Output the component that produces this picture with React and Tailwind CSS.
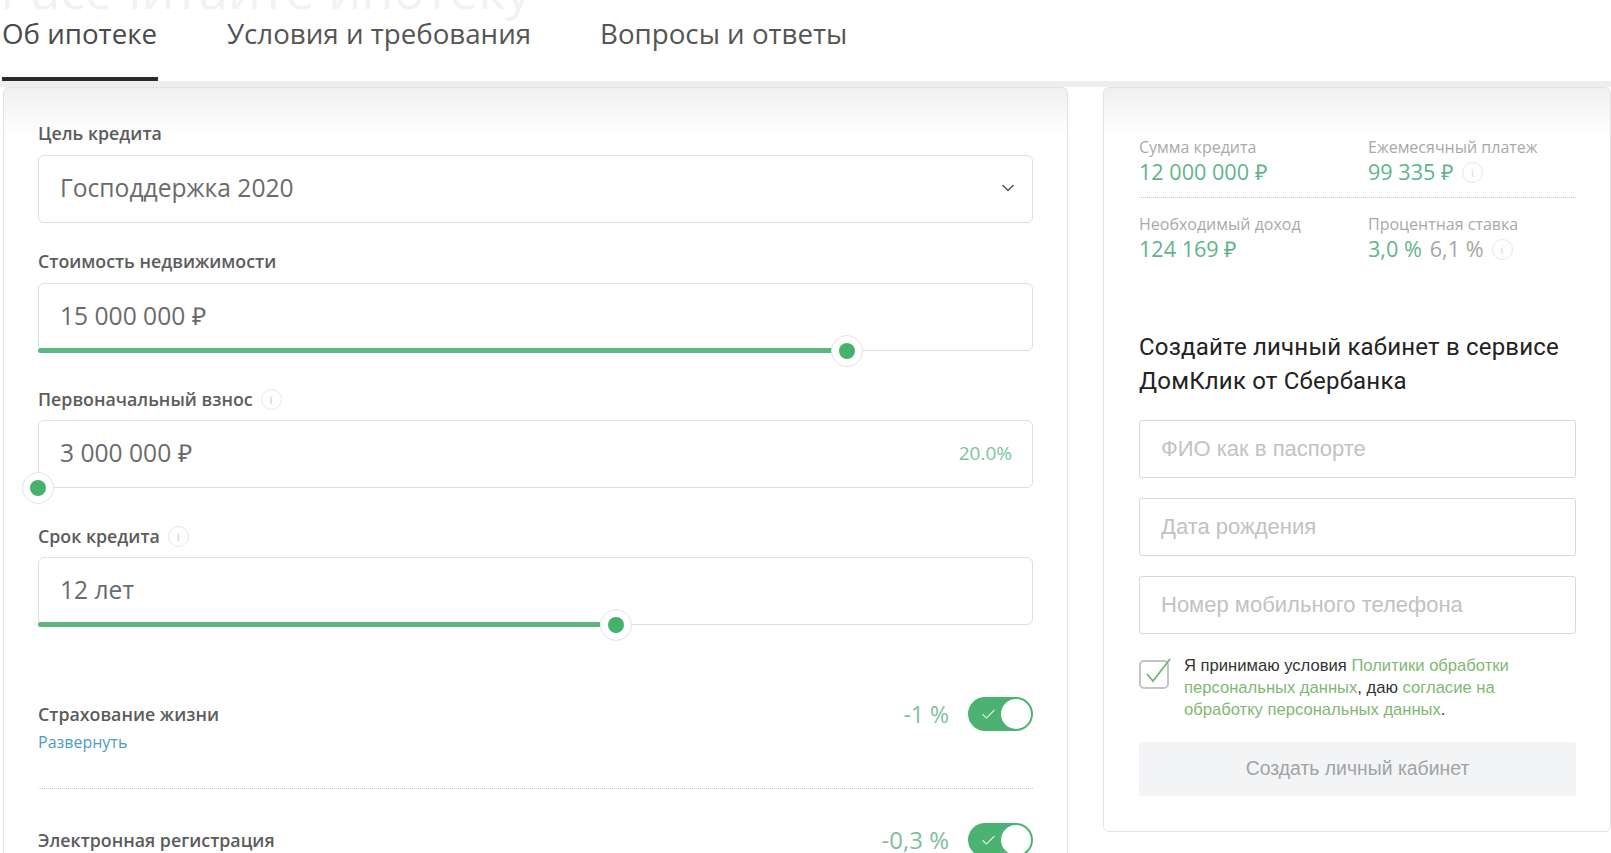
import { ChevronDown, Check } from "lucide-react"

const Info = ({ className = "" }) => (
  <span className={`inline-flex h-[21px] w-[21px] items-center justify-center rounded-full border border-[#e6e6e6] text-[11px] leading-none text-[#d4d4d4] ${className}`}>
    i
  </span>
)

const Thumb = ({ className }) => (
  <span className={`absolute bottom-[-17px] flex h-8 w-8 items-center justify-center rounded-full border border-[#e4e4e4] bg-white ${className}`}>
    <span className="h-4 w-4 rounded-full bg-[#45b26b]" />
  </span>
)

const Label = ({ children, info }) => (
  <div className={`flex h-[26px] items-center gap-2 text-[17.8px] font-semibold text-[#5c5c5c] ${info ? "mb-[8px]" : "mb-[9px]"}`}>
    {children}
    {info && <Info />}
  </div>
)

const Box = ({ children, right, fill, thumb }) => (
  <div className="relative flex h-[68px] items-center justify-between rounded-md border border-[#dedede] bg-white pb-[2px] pl-[21px] pr-5 text-[24.6px] text-[#6b6b6b]">
    <span>{children}</span>
    {right}
    {fill && <span className={`absolute bottom-[-3px] left-[-1px] h-[5px] rounded-l bg-[#5cb77e] ${fill}`} />}
    {thumb && <Thumb className={thumb} />}
  </div>
)

const Toggle = () => (
  <span className="flex h-[34px] w-[65px] items-center justify-between rounded-full bg-[#4cb272] pl-3 pr-[2px]">
    <Check size={17} strokeWidth={1.5} className="text-[#d8f3e2]" />
    <span className="h-[30px] w-[30px] rounded-full bg-white" />
  </span>
)

const Stat = ({ title, children }) => (
  <div>
    <div className="text-[16px] leading-5 text-[#a9a9a9]">{title}</div>
    <div className="mt-[1px] flex items-center gap-2 text-[21.6px] font-medium leading-7 text-[#5fb58a]">{children}</div>
  </div>
)

const TextField = ({ placeholder }) => (
  <input
    placeholder={placeholder}
    className="block h-[58px] w-full rounded-[3px] border border-[#d9d9d9] bg-white px-[21px] font-['Liberation_Sans',sans-serif] text-[22px] outline-none placeholder:text-[#c2c2c2]"
  />
)

export default function App() {
  return (
    <div className="h-[853px] w-[1611px] overflow-hidden bg-white font-['Open_Sans',sans-serif]">
      <div className="h-[81px] overflow-hidden">
        <h1 className="mt-[-42px] h-[55px] text-[52px] leading-[62px] text-[#f2f2f2]">Рассчитайте ипотеку</h1>
        <nav className="flex gap-[69px] pl-[2px] text-[27.7px] text-[#555]">
          <a className="h-[68px] w-[156px] border-b-4 border-[#2b2b2b] text-[#4a4a4a]">Об ипотеке</a>
          <a>Условия и требования</a>
          <a>Вопросы и ответы</a>
        </nav>
      </div>

      <div className="flex items-start gap-[35px] border-t-[6px] border-[#eeeeee] pl-[3px]">
        <section className="h-[800px] w-[1065px] shrink-0 rounded-md border border-[#e3e3e3] bg-[linear-gradient(to_bottom,#f0f0f0,#ffffff_50px)] px-[34px] pt-[32px]">
          <Label>Цель кредита</Label>
          <Box right={<ChevronDown size={20} strokeWidth={1.8} className="mr-[-6px] text-[#555]" />}>Господдержка 2020</Box>

          <div className="mt-[25px]">
            <Label>Стоимость недвижимости</Label>
            <Box fill="w-[795px]" thumb="left-[792px]">15 000 000 ₽</Box>
          </div>

          <div className="mt-[35px]">
            <Label info>Первоначальный взнос</Label>
            <Box right={<span className="text-[19px] text-[#7cc4a0]">20.0%</span>} thumb="left-[-17px]">3 000 000 ₽</Box>
          </div>

          <div className="mt-[35px]">
            <Label info>Срок кредита</Label>
            <Box fill="w-[562px]" thumb="left-[561px]">12 лет</Box>
          </div>

          <div className="mt-[72px] flex h-[34px] items-center justify-between">
            <span className="text-[17.8px] font-semibold text-[#5c5c5c]">Страхование жизни</span>
            <span className="flex items-center gap-[19px] text-[23px] text-[#7ebf9e]">
              -1 %
              <Toggle />
            </span>
          </div>
          <a className="block text-[16px] leading-[22px] text-[#4c9cc4]">Развернуть</a>

          <div className="mt-[35px] border-t border-dotted border-[#c9c9c9]" />

          <div className="mt-[34px] flex h-[34px] items-center justify-between">
            <span className="text-[17.8px] font-semibold text-[#5c5c5c]">Электронная регистрация</span>
            <span className="flex items-center gap-[19px] text-[24px] text-[#7ebf9e]">
              -0,3 %
              <Toggle />
            </span>
          </div>
        </section>

        <aside className="h-[745px] flex-1 rounded-md border border-[#e3e3e3] bg-[linear-gradient(to_bottom,#f0f0f0,#ffffff_50px)] pl-[35px] pr-[34px] pt-[49px]">
          <div className="grid grid-cols-[229px_1fr] border-b border-dotted border-[#c9c9c9] pb-[11px]">
            <Stat title="Сумма кредита">12 000 000 ₽</Stat>
            <Stat title="Ежемесячный платеж">99 335 ₽ <Info /></Stat>
          </div>
          <div className="mt-4 grid grid-cols-[229px_1fr]">
            <Stat title="Необходимый доход">124 169 ₽</Stat>
            <Stat title="Процентная ставка">
              3,0 %
              <span className="text-[#a6a6a6]">6,1 %</span>
              <Info />
            </Stat>
          </div>

          <h2 className="mt-[67px] font-['Roboto',sans-serif] text-[24px] leading-[34px] tracking-[0.2px] text-[#222]">
            Создайте личный кабинет в сервисе ДомКлик от Сбербанка
          </h2>

          <div className="mt-[22px] flex flex-col gap-[20px]">
            <TextField placeholder="ФИО как в паспорте" />
            <TextField placeholder="Дата рождения" />
            <TextField placeholder="Номер мобильного телефона" />
          </div>

          <div className="mt-[21px] flex gap-[13px] font-['Liberation_Sans',sans-serif] text-[16.6px] leading-[22px] text-[#333]">
            <svg width="32" height="32" viewBox="0 0 32 32" fill="none" className="mt-[2px] shrink-0">
              <rect x="1" y="4" width="28" height="27" rx="4" stroke="#c4c4c4" strokeWidth="2" />
              <path d="M8 17l6 7L31 2" stroke="#6fb57c" strokeWidth="1.8" />
            </svg>
            <p className="max-w-[345px]">
              Я принимаю условия <a className="text-[#7fb872]">Политики обработки персональных данных</a>, даю{" "}
              <a className="text-[#7fb872]">согласие на обработку персональных данных</a>.
            </p>
          </div>

          <button className="mt-[21px] h-[54px] w-full rounded-[3px] bg-[#f2f4f6] font-['Liberation_Sans',sans-serif] text-[19.4px] text-[#a3a3a3]">
            Создать личный кабинет
          </button>
        </aside>
      </div>
    </div>
  )
}
